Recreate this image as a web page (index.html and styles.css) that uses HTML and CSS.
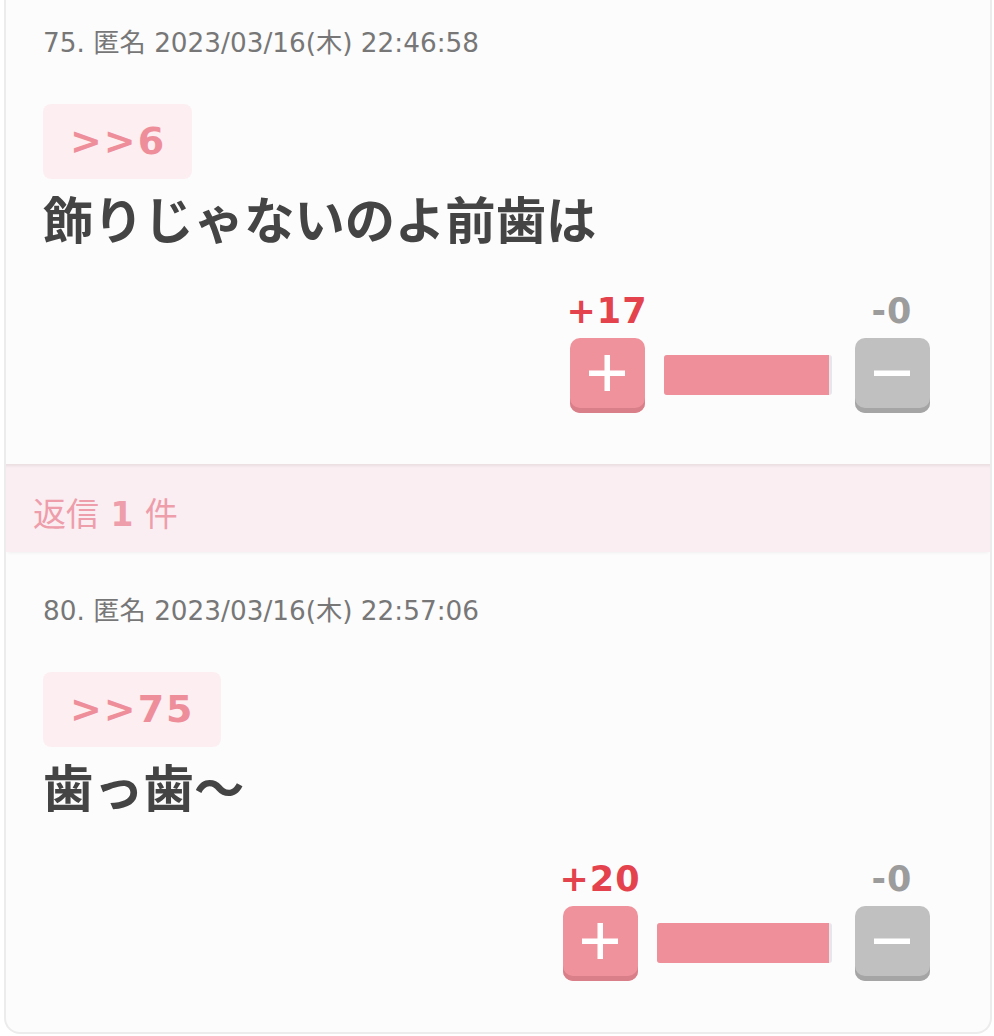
FILE: index.html
```html
<!DOCTYPE html>
<html lang="ja">
<head>
<meta charset="utf-8">
<title>返信</title>
<link rel="stylesheet" href="styles.css">
</head>
<body>
<div class="thread">
  <section class="post">
    <div class="meta">75. 匿名 2023/03/16(木) 22:46:58</div>
    <div class="anchor">&gt;&gt;6</div>
    <p class="body">飾りじゃないのよ前歯は</p>
    <div class="votes">
      <div class="vote-col">
        <span class="count plus-count">+17</span>
        <button class="btn btn-plus" aria-label="plus">
          <svg width="36" height="36" viewBox="0 0 36 36"><rect x="15.5" y="0" width="5.5" height="36" fill="#fff"/><rect x="0" y="15.5" width="36" height="5.5" fill="#fff"/></svg>
        </button>
      </div>
      <div class="bar"><div class="bar-fill" style="width: 98%"></div></div>
      <div class="vote-col">
        <span class="count minus-count">-0</span>
        <button class="btn btn-minus" aria-label="minus">
          <svg width="36" height="36" viewBox="0 0 36 36"><rect x="0" y="15.5" width="36" height="5.5" fill="#fff"/></svg>
        </button>
      </div>
    </div>
  </section>
  <div class="replies">返信 <b>1</b> 件</div>
  <section class="post">
    <div class="meta">80. 匿名 2023/03/16(木) 22:57:06</div>
    <div class="anchor">&gt;&gt;75</div>
    <p class="body">歯っ歯〜</p>
    <div class="votes">
      <div class="vote-col">
        <span class="count plus-count">+20</span>
        <button class="btn btn-plus" aria-label="plus">
          <svg width="36" height="36" viewBox="0 0 36 36"><rect x="15.5" y="0" width="5.5" height="36" fill="#fff"/><rect x="0" y="15.5" width="36" height="5.5" fill="#fff"/></svg>
        </button>
      </div>
      <div class="bar bar-wide"><div class="bar-fill" style="width: 98%"></div></div>
      <div class="vote-col">
        <span class="count minus-count">-0</span>
        <button class="btn btn-minus" aria-label="minus">
          <svg width="36" height="36" viewBox="0 0 36 36"><rect x="0" y="15.5" width="36" height="5.5" fill="#fff"/></svg>
        </button>
      </div>
    </div>
  </section>
</div>
</body>
</html>
```
FILE: styles.css
```css
* { box-sizing: border-box; }

html, body {
  margin: 0;
  padding: 0;
  background: #ffffff;
}

body {
  font-family: "DejaVu Sans", "Noto Sans CJK JP", sans-serif;
  color: #444;
}

.thread {
  width: 988px;
  margin: -16px 0 0 4px;
  background: #fcfcfc;
  border: 2px solid #ececec;
  border-top: none;
  border-radius: 0 0 16px 16px;
}

.post {
  height: 480px;
  padding: 41px 60px 0 37px;
}

.meta {
  font-size: 26.3px;
  line-height: 36px;
  color: #777;
}

.anchor {
  display: inline-block;
  margin-top: 43px;
  height: 75px;
  padding: 0 26px 0 27px;
  background: #fdeef1;
  border-radius: 8px;
  color: #ef8e9b;
  font-family: "DejaVu Sans", sans-serif;
  font-weight: bold;
  font-size: 38px;
  line-height: 75px;
  letter-spacing: 2px;
}

.body {
  margin: 8px 0 0;
  font-family: "Noto Sans CJK JP", sans-serif;
  font-weight: bold;
  font-size: 50.3px;
  line-height: 60px;
  color: #444;
}

.votes {
  margin-top: 44px;
  display: flex;
  justify-content: flex-end;
  align-items: flex-end;
}

.vote-col {
  display: flex;
  flex-direction: column;
  align-items: center;
  width: 76px;
}

.count {
  font-family: "DejaVu Sans", sans-serif;
  font-weight: bold;
  font-size: 35px;
  line-height: 40px;
  margin-bottom: 7px;
  white-space: nowrap;
  letter-spacing: 1px;
}

.plus-count { color: #e4424c; }
.minus-count { color: #9c9c9c; }

.btn {
  width: 75px;
  height: 75px;
  border: none;
  border-radius: 10px;
  padding: 0 0 5px;
  display: flex;
  align-items: center;
  justify-content: center;
  cursor: pointer;
}

.btn-plus {
  background: #f0929c;
  box-shadow: inset 0 -5px 0 #d97f89;
}

.btn-minus {
  background: #c0c0c0;
  box-shadow: inset 0 -5px 0 #a5a5a5;
}

.bar {
  width: 168px;
  height: 40px;
  margin: 0 22px 18px 19px;
  background: #e6e6ec;
  border-radius: 3px;
  overflow: hidden;
}

.bar-wide {
  width: 175px;
}

.bar-fill {
  height: 100%;
  background: #ef8f99;
}

.replies {
  height: 88px;
  padding: 8px 0 0 27px;
  background: #fbeef2;
  box-shadow: inset 0 4px 3px -2px rgba(0, 0, 0, 0.07), 0 3px 3px -2px rgba(0, 0, 0, 0.05);
  font-family: "Noto Sans CJK JP", sans-serif;
  font-size: 33px;
  line-height: 80px;
  color: #ee9dab;
  word-spacing: 4px;
}

.replies b {
  font-family: "DejaVu Sans", sans-serif;
  font-weight: bold;
}
```
